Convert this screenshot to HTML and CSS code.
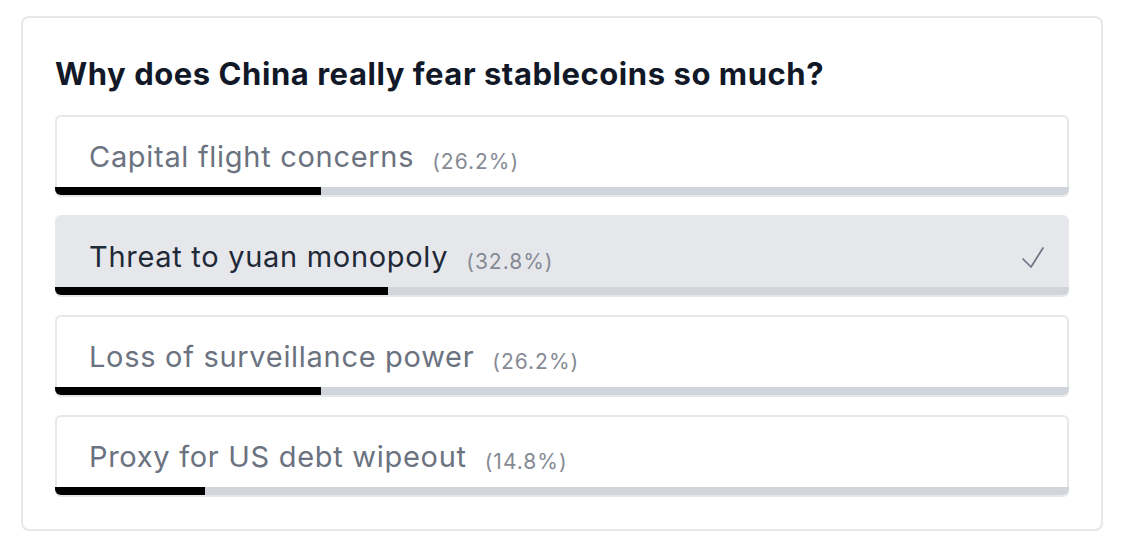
FILE: index.html
```html
<!DOCTYPE html>
<html lang="en">
<head>
<meta charset="utf-8">
<title>Poll</title>
<link rel="stylesheet" href="styles.css">
</head>
<body>
<div class="card">
  <h2 class="question">Why does China really fear stablecoins so much?</h2>
  <div class="options">
    <div class="option">
      <div class="label"><span class="text">Capital flight concerns</span><span class="pct">(26.2%)</span></div>
      <div class="bar"><div class="fill" style="width:26.2%"></div></div>
    </div>
    <div class="option selected">
      <div class="label"><span class="text">Threat to yuan monopoly</span><span class="pct">(32.8%)</span>
        <svg class="check" width="24" height="24" viewBox="0 0 24 24" fill="none" stroke="currentColor" stroke-width="1.7" stroke-linecap="round" stroke-linejoin="round"><path d="M2 13l8 8L22 2"/></svg>
      </div>
      <div class="bar"><div class="fill" style="width:32.8%"></div></div>
    </div>
    <div class="option">
      <div class="label"><span class="text">Loss of surveillance power</span><span class="pct">(26.2%)</span></div>
      <div class="bar"><div class="fill" style="width:26.2%"></div></div>
    </div>
    <div class="option">
      <div class="label"><span class="text">Proxy for US debt wipeout</span><span class="pct">(14.8%)</span></div>
      <div class="bar"><div class="fill" style="width:14.8%"></div></div>
    </div>
  </div>
</div>
</body>
</html>
```
FILE: styles.css
```css
* { box-sizing: border-box; }
html, body { margin: 0; padding: 0; background: #ffffff; }
body {
  padding: 16px 19px 0 21px;
  font-family: Inter, "Noto Sans", "Liberation Sans", sans-serif;
}
.card {
  width: 1082px;
  height: 515px;
  border: 2px solid #e5e7eb;
  border-radius: 8px;
  padding: 38px 32px 32px 32px;
}
.question {
  margin: 0 0 23px 0;
  font-size: 31px;
  line-height: 36px;
  font-weight: 700;
  color: #111827;
  letter-spacing: 0.55px;
}
.options {
  display: flex;
  flex-direction: column;
  gap: 18px;
}
.option {
  display: flex;
  flex-direction: column;
  height: 82px;
  border: 2px solid #e5e7eb;
  border-radius: 6px;
  background: #ffffff;
}
.option.selected { background: #e5e7eb; }
.label {
  flex: 1;
  display: flex;
  align-items: baseline;
  padding: 23px 22px 0 32px;
  color: #6b7280;
}
.selected .label { color: #1f2937; }
.text {
  font-size: 29px;
  line-height: 34px;
  letter-spacing: 0.7px;
}
.pct {
  margin-left: 18px;
  font-size: 21px;
  letter-spacing: 1px;
  color: #858a94;
  position: relative;
  top: 2px;
}
.check {
  margin-left: auto;
  align-self: flex-start;
  margin-top: 6px;
  color: #6b7280;
}
.bar {
  margin: 0 -2px;
  height: 8px;
  background: #d1d5db;
  border-radius: 0 0 6px 6px;
}
.fill {
  height: 100%;
  background: #000000;
  border-radius: 0 0 0 6px;
}
```
